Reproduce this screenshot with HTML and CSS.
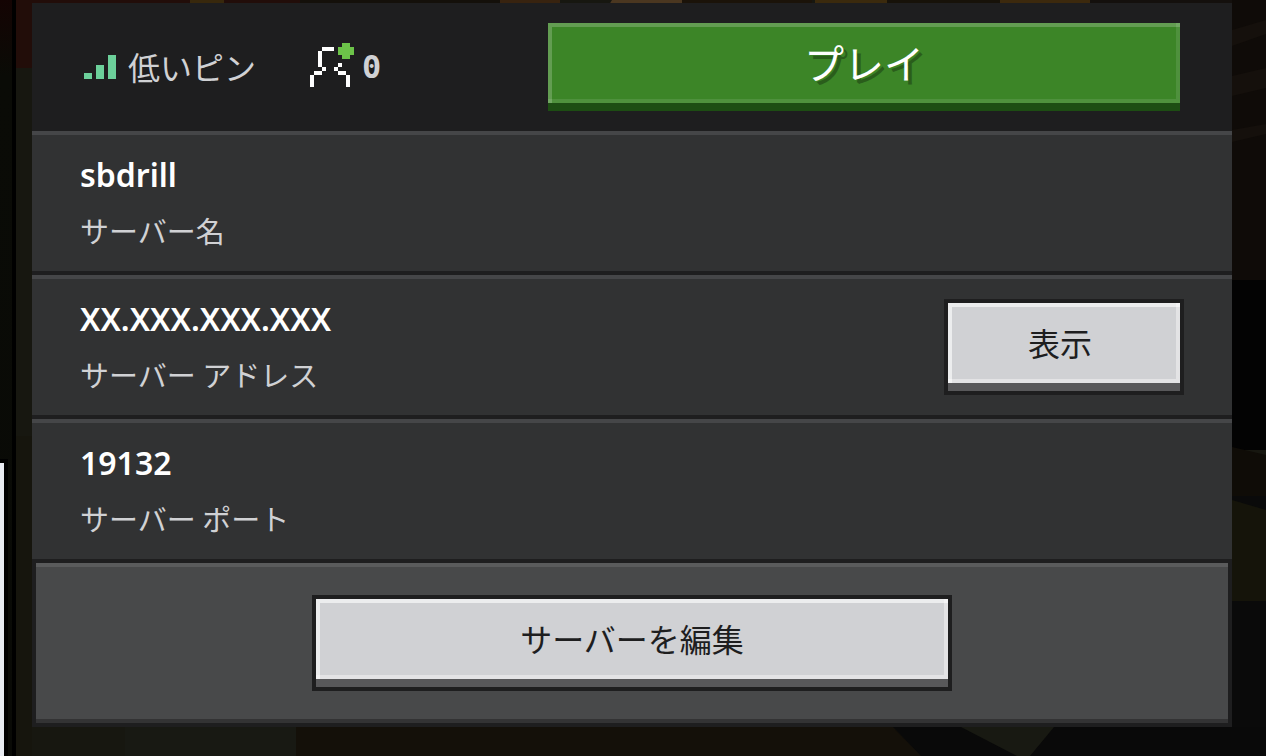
FILE: index.html
```html
<!DOCTYPE html>
<html lang="ja">
<head>
    <meta charset="UTF-8">
    <meta name="viewport" content="width=device-width, initial-scale=1.0">
    <title>サーバー</title>
    <link rel="stylesheet" href="styles.css">
</head>
<body>

    <!-- Blurred world behind the panel -->
    <svg class="scene" viewBox="0 0 1266 756" preserveAspectRatio="none" aria-hidden="true">
        <rect width="1266" height="756" fill="#171710"/>
        <rect width="300" height="68" fill="#220d09"/>
        <rect x="190" width="34" height="10" fill="#38280c"/>
        <rect x="300" width="260" height="10" fill="#14100a"/>
        <rect x="500" width="60" height="10" fill="#38230f"/>
        <path d="M612 0h70v10h-76z" fill="#4b3720"/>
        <rect x="682" width="130" height="10" fill="#1b1309"/>
        <rect x="815" width="72" height="10" fill="#3b2a0d"/>
        <rect x="887" width="113" height="10" fill="#171209"/>
        <rect x="1000" width="90" height="10" fill="#3c290d"/>
        <rect x="1090" width="176" height="10" fill="#14100d"/>
        <rect x="1232" width="34" height="280" fill="#0f0b08"/>
        <path d="M1232 30l34-10v14l-34 12zM1232 76l34-8v20l-34 8zM1232 130l34-6v10l-34 8z" fill="#15100c"/>
        <rect x="1232" y="280" width="34" height="170" fill="#030303"/>
        <path d="M1232 447l34 8v41h-34z" fill="#0f0c07"/>
        <rect x="1232" y="496" width="34" height="20" fill="#0a0a0a"/>
        <path d="M1232 500l34 10v91h-34z" fill="#15140a"/>
        <rect x="1232" y="601" width="34" height="155" fill="#0a0a0a"/>
        <rect x="16" y="436" width="16" height="320" fill="#16150d"/>
        <path d="M125 727h171v29H125z" fill="#181913"/>
        <path d="M296 727h597l28 29H296z" fill="#141009"/>
        <path d="M893 727h373v29H921z" fill="#090909"/>
        <path d="M961 727h93l-24 29h-13z" fill="#181912"/>
    </svg>

    <aside class="side-edge">
        <div class="side-card"></div>
    </aside>

    <main class="server-panel">
        <header class="panel-header">
            <div class="status">
                <svg class="ping-icon" viewBox="0 0 32 24" width="32" height="24" aria-hidden="true">
                    <path d="M0 18h8v6H0zM12 10h8v14h-8zM24 0h8v24h-8z" fill="#6cd09a"/>
                </svg>
                <span class="ping-text">低いピン</span>
                <svg class="player-icon" viewBox="0 0 44 44" width="44" height="44" shape-rendering="crispEdges" aria-hidden="true">
                    <path d="M12 4h12v4H12zM8 8h4v16H8zM12 24h4v4h-4zM4 28h8v4H4zM0 32h4v12H0zM28 20h4v4h-4zM24 24h4v4h-4zM28 28h8v4h-8zM36 32h4v12h-4z" fill="#fff"/>
                    <path d="M32 0h8v4h4v8h-4v4h-8v-4h-4V4h4z" fill="#6cc349"/>
                </svg>
                <span class="player-count">0</span>
            </div>
            <button class="btn play-btn" type="button"><span class="btn-face">プレイ</span></button>
        </header>

        <section class="row">
            <div class="row-text">
                <div class="value">sbdrill</div>
                <div class="label">サーバー名</div>
            </div>
        </section>

        <section class="row">
            <div class="row-text">
                <div class="value">XX.XXX.XXX.XXX</div>
                <div class="label">サーバー アドレス</div>
            </div>
            <button class="btn light-btn show-btn" type="button"><span class="btn-face">表示</span></button>
        </section>

        <section class="row">
            <div class="row-text">
                <div class="value">19132</div>
                <div class="label">サーバー ポート</div>
            </div>
        </section>

        <footer class="panel-footer">
            <div class="footer-inner">
                <button class="btn light-btn edit-btn" type="button"><span class="btn-face">サーバーを編集</span></button>
            </div>
        </footer>
    </main>

</body>
</html>
```

FILE: styles.css
```css
* {
    box-sizing: border-box;
}

body {
    margin: 0;
    min-height: 100vh;
    display: flex;
    overflow: hidden;
    background: #171710;
    color: #fff;
    font-family: "Noto Sans CJK JP", sans-serif;
}

.scene {
    position: absolute;
    inset: 0;
    width: 100%;
    height: 100%;
    z-index: -1;
}

/* Edge of the server list on the left */
.side-edge {
    width: 16px;
    display: flex;
    flex-direction: column;
    justify-content: flex-end;
    background: linear-gradient(#140403, #0a0b06 10%, #090a06);
    border-right: 4px solid #000;
}

.side-card {
    width: 8px;
    height: 297px;
    background: #e9ecf2;
    border-top: 4px solid #000;
    border-right: 4px solid #000;
}

.server-panel {
    flex: 1;
    align-self: flex-start;
    margin: 3px 34px 0 16px;
    background: #1e1e1f;
}

.panel-header {
    display: grid;
    grid-template-columns: 464px 1fr;
    align-items: center;
    padding: 20px 52px;
}

.status {
    display: flex;
    align-items: center;
    color: #d0d1d4;
}

.ping-text {
    margin-left: 12px;
    padding-bottom: 2px;
    font-size: 32px;
    line-height: 40px;
}

.player-icon {
    margin: 0 0 4px 54px;
}

.player-count {
    margin-left: 8px;
    font-family: "DejaVu Sans Mono", monospace;
    font-weight: bold;
    font-size: 32px;
    line-height: 40px;
}

/* Buttons */
.btn {
    display: block;
    padding: 0;
    border: none;
    font-family: inherit;
    font-size: 32px;
    cursor: pointer;
}

.btn-face {
    display: flex;
    align-items: center;
    justify-content: center;
    height: 80px;
    margin-bottom: 8px;
    padding-bottom: 2px;
}

.play-btn {
    background: #1d4d13;
    color: #fff;
    font-size: 40px;
    font-weight: 400;
    text-shadow: 4px 4px 0 #2a5d1b;
}

.play-btn .btn-face {
    background: #3c8527;
    box-shadow: inset 4px 4px rgba(255, 255, 255, 0.2), inset -4px -4px rgba(255, 255, 255, 0.1);
}

.light-btn {
    background: #58585a;
    color: #1e1e1f;
    border: 4px solid #1e1e1f;
}

.light-btn .btn-face {
    background: #d0d1d4;
    box-shadow: inset 4px 4px rgba(255, 255, 255, 0.6), inset -4px -4px rgba(255, 255, 255, 0.4);
}

.show-btn {
    width: 240px;
}

.show-btn .btn-face {
    padding-right: 8px;
}

.edit-btn {
    width: 640px;
}

/* Server details */
.row {
    display: flex;
    align-items: center;
    justify-content: space-between;
    min-height: 144px;
    padding: 0 48px;
    background: #313233;
    border-top: 4px solid #454648;
    border-bottom: 4px solid #1e1e1f;
}

.value {
    font-family: "Noto Sans", sans-serif;
    font-size: 32px;
    font-weight: 600;
    line-height: 54px;
}

.label {
    font-size: 29px;
    line-height: 56px;
    color: #d0d1d4;
}

.panel-footer {
    padding: 0 4px 4px;
}

.footer-inner {
    display: flex;
    justify-content: center;
    padding: 28px 0;
    background: #48494a;
    border-top: 4px solid #5a5b5c;
    border-bottom: 4px solid #333334;
}
```
